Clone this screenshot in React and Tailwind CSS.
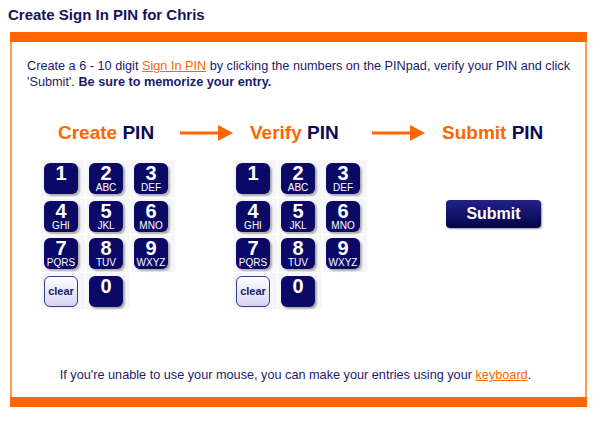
import React from 'react';

const keys = [
  ['1', ''], ['2', 'ABC'], ['3', 'DEF'],
  ['4', 'GHI'], ['5', 'JKL'], ['6', 'MNO'],
  ['7', 'PQRS'], ['8', 'TUV'], ['9', 'WXYZ'],
];

const Arrow = () => (
  <svg width="53" height="16" viewBox="0 0 53 16">
    <rect x="0" y="6.5" width="40" height="3" fill="#ff6600" />
    <polygon points="38,0 53,8 38,16" fill="#ff6600" />
  </svg>
);

const Key = ({ num, letters }) => (
  <div className="w-[44px] h-[36.5px] bg-[#f6f6fa] pl-[3px] pt-[3px]">
    <div className="w-[34px] h-[31px] rounded-[6px] bg-[#0a0a66] shadow-[2px_2px_2px_rgba(0,0,0,0.3)] flex flex-col items-center text-white">
      <span className="text-[20px] font-bold leading-[19px] mt-[1px]">{num}</span>
      {letters && <span className="text-[10px] leading-[10px]">{letters}</span>}
    </div>
  </div>
);

const Keypad = () => (
  <div className="grid grid-cols-[44px_44px_44px] gap-x-[1px] gap-y-[1px]">
    {keys.map(([n, l]) => <Key key={n} num={n} letters={l} />)}
    <div className="w-[44px] h-[36.5px] bg-[#f6f6fa] pl-[3px] pt-[3px]">
      <div className="w-[34px] h-[31px] rounded-[6px] border border-[#3a3a8a] bg-gradient-to-b from-white to-[#d4d4f0] flex items-center justify-center text-[11px] font-bold text-[#1a1a6a]">
        clear
      </div>
    </div>
    <Key num="0" letters="" />
  </div>
);

const Heading = ({ word }) => (
  <div className="w-[122px] text-[19px] font-bold">
    <span className="text-[#ff6600]">{word}</span> <span className="text-[#0a0a5a]">PIN</span>
  </div>
);

const App = () => {
  return (
    <div className="w-[600px] h-[421px] bg-white font-['Liberation_Sans',Arial,sans-serif] text-[#1b1b6e]">
      <div className="h-[32px] pl-[8px] pt-[4px] text-[15px] font-bold text-[#14145a]">
        Create Sign In PIN for Chris
      </div>
      <div className="ml-[10px] w-[577px] border-x-2 border-[#ff9a5a]">
        <div className="h-[10px] bg-[#ff6600] -mx-[2px]"></div>
        <div className="h-[355px] flex flex-col">
          <p className="pl-[15px] pt-[16px] text-[12.7px] leading-[16px]">
            Create a 6 - 10 digit <span className="text-[#ff6600] underline">Sign In PIN</span> by clicking the numbers on the PINpad, verify your PIN and click 'Submit'. <b>Be sure to memorize your entry.</b>
          </p>
          <div className="flex pl-[29px] mt-[33px]">
            <div className="w-[192px]">
              <div className="flex items-center pl-[17px] h-[20px]">
                <Heading word="Create" />
                <Arrow />
              </div>
              <div className="mt-[17px]">
                <Keypad />
              </div>
            </div>
            <div className="w-[192px]">
              <div className="flex items-center pl-[17px] h-[20px]">
                <Heading word="Verify" />
                <Arrow />
              </div>
              <div className="mt-[17px]">
                <Keypad />
              </div>
            </div>
            <div className="w-[140px]">
              <div className="flex items-center pl-[17px] h-[20px]">
                <Heading word="Submit" />
              </div>
              <button className="ml-[21px] mt-[57px] w-[95px] h-[28px] rounded-[4px] bg-gradient-to-b from-[#22228a] to-[#05054a] text-white text-[16px] font-bold shadow-[1px_1px_2px_rgba(0,0,0,0.4)]">
                Submit
              </button>
            </div>
          </div>
          <p className="mt-auto mb-[14px] text-center text-[12.7px] leading-[16px] pr-[6px]">
            If you're unable to use your mouse, you can make your entries using your <span className="text-[#ff6600] underline">keyboard</span>.
          </p>
        </div>
        <div className="h-[10px] bg-[#ff6600] -mx-[2px]"></div>
      </div>
    </div>
  );
};

export default App;
